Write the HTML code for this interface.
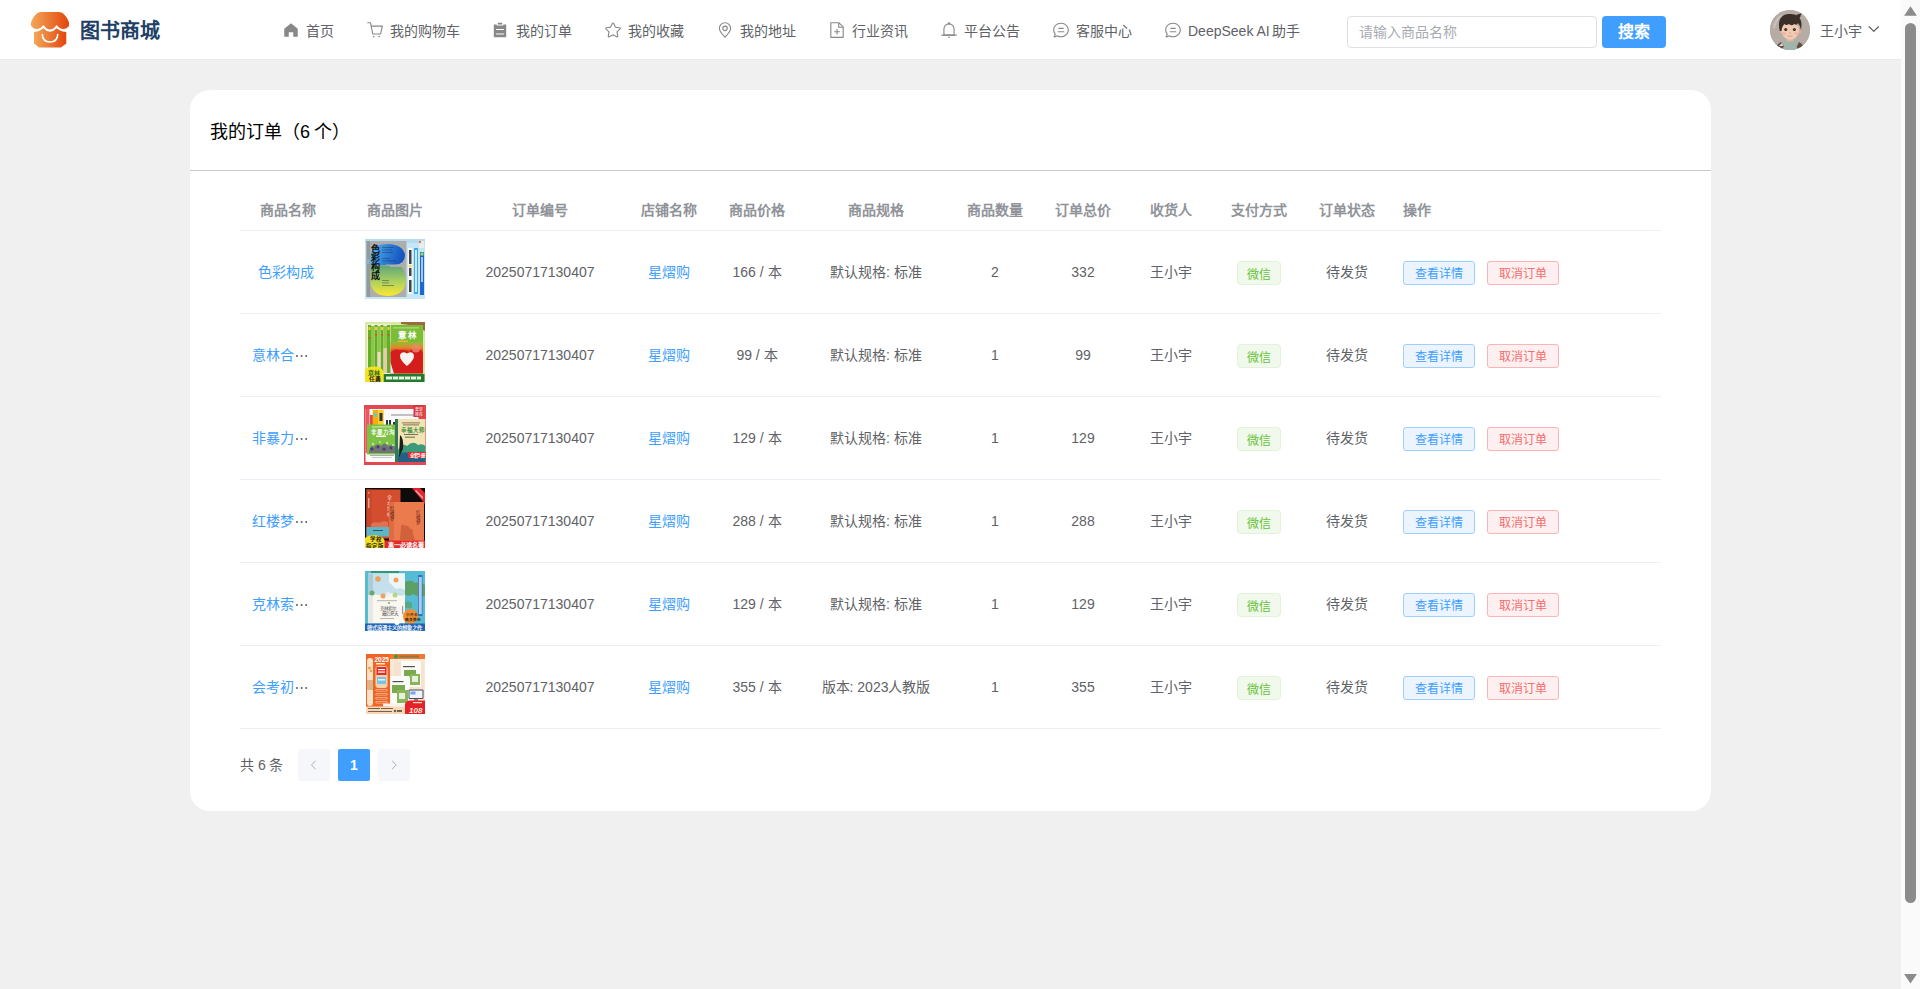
<!DOCTYPE html>
<html lang="zh-CN">
<head>
<meta charset="utf-8">
<title>我的订单</title>
<style>
*{box-sizing:border-box;margin:0;padding:0}
html,body{width:1920px;height:989px;overflow:hidden}
body{font-family:"Liberation Sans",sans-serif;background:#f0f0f0;position:relative;color:#606266;font-size:14px}
.abs{position:absolute}
.hdr{position:absolute;left:0;top:0;width:1901px;height:60px;background:#fff;border-bottom:1px solid #ebebeb}
.logo{position:absolute;left:28px;top:8px;width:44px;height:44px}
.brand{position:absolute;left:80px;top:16px;font-size:20px;line-height:30px;font-weight:bold;color:#213f66;white-space:nowrap}
.nav{position:absolute;top:0;height:59px}
.nav svg{position:absolute;top:21px;width:18px;height:18px;fill:#888}
.nav span{position:absolute;top:21px;line-height:20px;font-size:14px;color:#606266;white-space:nowrap}
.search{position:absolute;left:1347px;top:16px;width:250px;height:32px;border:1px solid #dcdfe6;border-radius:4px;background:#fff}
.search span{position:absolute;left:11px;top:5px;line-height:20px;font-size:14px;color:#a8abb2;white-space:nowrap}
.sbtn{position:absolute;left:1602px;top:16px;width:64px;height:32px;border-radius:4px;background:#409eff;color:#fff;font-size:16px;font-weight:bold;text-align:center;line-height:32px}
.avatar{position:absolute;left:1770px;top:10px;width:40px;height:40px;border-radius:50%;overflow:hidden;background:#b1a9a3}
.uname{position:absolute;left:1820px;top:21px;line-height:20px;font-size:14px;color:#606266;white-space:nowrap}
.sb{position:absolute;left:1901px;top:0;width:19px;height:989px;background:#fafafa}
.card{position:absolute;left:190px;top:90px;width:1521px;height:721px;background:#fff;border-radius:20px}
.ctitle{position:absolute;left:20px;top:30px;font-size:18px;line-height:24px;color:#000;white-space:nowrap}
.csep{position:absolute;left:0;top:80px;width:1521px;height:1px;background:#cbcbcb}
.th{position:absolute;top:199px;line-height:23px;font-size:14px;font-weight:bold;color:#909399;text-align:center;white-space:nowrap}
.rl{position:absolute;left:240px;width:1421px;height:1px;background:#ebeef5}
.td{position:absolute;line-height:23px;font-size:14px;color:#606266;text-align:center;white-space:nowrap}
.lk{color:#409eff}
.ell{display:inline-block;width:14px;height:23px;position:relative;vertical-align:top}
.ell:before{content:"";position:absolute;left:1.5px;top:10.5px;width:2px;height:2px;border-radius:1px;background:#5a5c60;box-shadow:4.6px 0 0 #5a5c60,9.2px 0 0 #5a5c60}
.img{position:absolute;left:365px;width:60px;height:60px;overflow:hidden;background:#ddd}
.tag{position:absolute;left:1237px;width:44px;height:24px;border:1px solid #e1f3d8;background:#f0f9eb;color:#67c23a;border-radius:4px;font-size:12px;line-height:22px;padding-top:2px;text-align:center;white-space:nowrap}
.btn{position:absolute;width:72px;height:24px;border:1px solid;border-radius:3px;font-size:12px;font-weight:500;line-height:22px;padding-top:1px;text-align:center;white-space:nowrap}
.bp{left:1403px;border-color:#a0cfff;background:#ecf5ff;color:#409eff}
.bd{left:1487px;border-color:#fab6b6;background:#fef0f0;color:#f56c6c}
.ptot{position:absolute;left:240px;top:755px;line-height:20px;font-size:14px;color:#606266;white-space:nowrap}
.pb{position:absolute;top:749px;width:32px;height:32px;border-radius:2px;background:#f5f7fa;color:#fff;font-weight:bold;font-size:14px;line-height:32px;text-align:center}
.pb svg{position:absolute;left:10px;top:10px;width:12px;height:12px;fill:#a8abb2}
.pa{background:#409eff}
.im3{left:364px!important;width:62px!important}.im6{left:366px!important;width:59px!important}
</style>
</head>
<body>
<div class="hdr">
  <svg class="logo" viewBox="0 0 44 44">
    <defs><linearGradient id="lg" x1="0" x2="1" y1="0" y2="0"><stop offset="0" stop-color="#f3a758"/><stop offset="1" stop-color="#e2460e"/></linearGradient></defs>
    <path fill="url(#lg)" d="M13 4H31Q36 4 40 12Q42 16 40.5 18.5Q38 21.5 34.5 21Q31 20.5 28.5 17Q25.5 21.5 22 21.5Q18.5 21.5 15.5 17Q13 20.5 9.5 21Q6 21.5 3.5 18.5Q2 16 4 12Q8 4 13 4Z"/>
    <path fill="url(#lg)" d="M6 24Q11 24 15.3 20.3Q18.5 23.8 22 23.8Q25.5 23.8 28.6 20.3Q33 24 38.3 24V35.5L33 39.6H11L6 35.5Z"/>
    <path d="M14.3 26.6Q14.5 34 22 34Q29.5 34 29.7 26.6" fill="none" stroke="#fff" stroke-width="1.6" stroke-linecap="round"/>
  </svg>
  <div class="brand">图书商城</div>
  <div class="nav"><svg viewBox="0 0 1024 1024" style="left:281.5px"><path d="M512 128 128 447.936V896h255.936V640H640v256h255.936V447.936z"/></svg><span style="left:306.0px">首页</span></div>
  <div class="nav"><svg viewBox="0 0 1024 1024" style="left:366.1px"><path d="M432 928a48 48 0 1 1 0-96 48 48 0 0 1 0 96m320 0a48 48 0 1 1 0-96 48 48 0 0 1 0 96M96 128a32 32 0 0 1 0-64h160a32 32 0 0 1 31.36 25.728L320.64 256H928a32 32 0 0 1 31.296 38.72l-96 448A32 32 0 0 1 832 768H384a32 32 0 0 1-31.36-25.728L229.76 128zm314.24 576h395.904l82.176-384H333.44l76.8 384z"/></svg><span style="left:390.3px">我的购物车</span></div>
  <div class="nav"><svg viewBox="0 0 1024 1024" style="left:491.4px"><path d="M704 192h160v736H160V192h160v64h384zM288 512h448v-64H288zm0 256h448v-64H288zm96-576V96h256v96z"/></svg><span style="left:516.3px">我的订单</span></div>
  <div class="nav"><svg viewBox="0 0 1024 1024" style="left:603.5px"><path d="M512 747.84l228.16 119.936a6.4 6.4 0 0 0 9.28-6.72l-43.52-254.08 184.512-179.904a6.4 6.4 0 0 0-3.52-10.88l-255.104-37.12L517.76 147.904a6.4 6.4 0 0 0-11.52 0L392.192 379.072l-255.104 37.12a6.4 6.4 0 0 0-3.52 10.88L318.08 606.976l-43.584 254.08a6.4 6.4 0 0 0 9.28 6.72zM313.6 924.48a70.4 70.4 0 0 1-102.144-74.24l37.888-220.928L88.96 472.96A70.4 70.4 0 0 1 128 352.896l221.76-32.256 99.2-200.96a70.4 70.4 0 0 1 126.208 0l99.2 200.96 221.824 32.256a70.4 70.4 0 0 1 39.04 120.064L774.72 629.376l37.888 220.928a70.4 70.4 0 0 1-102.144 74.24L512 820.096l-198.4 104.32z"/></svg><span style="left:628.3px">我的收藏</span></div>
  <div class="nav"><svg viewBox="0 0 1024 1024" style="left:715.5px"><path d="M800 416a288 288 0 1 0-576 0c0 118.144 94.528 272.128 288 456.576C705.472 688.128 800 534.144 800 416M512 960C277.312 746.688 160 565.312 160 416a352 352 0 0 1 704 0c0 149.312-117.312 330.688-352 544"/><path d="M512 512a96 96 0 1 0 0-192 96 96 0 0 0 0 192m0 64a160 160 0 1 1 0-320 160 160 0 0 1 0 320"/></svg><span style="left:740.0px">我的地址</span></div>
  <div class="nav"><svg viewBox="0 0 1024 1024" style="left:827.8px"><path d="M832 384H576V128H192v768h640zm-26.496-64L640 154.496V320zM160 64h480l256 256v608a32 32 0 0 1-32 32H160a32 32 0 0 1-32-32V96a32 32 0 0 1 32-32m320 512V448h64v128h128v64H544v128h-64V640H352v-64z"/></svg><span style="left:852.0px">行业资讯</span></div>
  <div class="nav"><svg viewBox="0 0 1024 1024" style="left:940.1px"><path d="M512 64a64 64 0 0 1 64 64v64H448v-64a64 64 0 0 1 64-64"/><path d="M256 768h512V448a256 256 0 1 0-512 0zm256-640a320 320 0 0 1 320 320v384H192V448a320 320 0 0 1 320-320"/><path d="M96 768h832q32 0 32 32t-32 32H96q-32 0-32-32t32-32m352 128h128a64 64 0 0 1-128 0"/></svg><span style="left:963.6px">平台公告</span></div>
  <div class="nav"><svg viewBox="0 0 1024 1024" style="left:1051.6px"><path d="M174.72 855.68l135.296-45.12 23.68 11.84C388.096 849.536 448.576 864 512 864c211.84 0 384-166.784 384-352S723.84 160 512 160 128 326.784 128 512c0 69.12 24.96 139.264 70.848 199.232l22.08 28.8-46.272 115.584zm-45.248 82.56A32 32 0 0 1 89.6 896l58.368-145.92C94.72 680.32 64 596.864 64 512 64 299.904 256 96 512 96s448 203.904 448 416-192 416-448 416a461.056 461.056 0 0 1-206.912-48.384l-175.616 58.56z"/><path d="M352 576h320q32 0 32 32t-32 32H352q-32 0-32-32t32-32m32-192h256q32 0 32 32t-32 32H384q-32 0-32-32t32-32"/></svg><span style="left:1076.0px">客服中心</span></div>
  <div class="nav"><svg viewBox="0 0 1024 1024" style="left:1163.5px"><path d="M174.72 855.68l135.296-45.12 23.68 11.84C388.096 849.536 448.576 864 512 864c211.84 0 384-166.784 384-352S723.84 160 512 160 128 326.784 128 512c0 69.12 24.96 139.264 70.848 199.232l22.08 28.8-46.272 115.584zm-45.248 82.56A32 32 0 0 1 89.6 896l58.368-145.92C94.72 680.32 64 596.864 64 512 64 299.904 256 96 512 96s448 203.904 448 416-192 416-448 416a461.056 461.056 0 0 1-206.912-48.384l-175.616 58.56z"/><path d="M352 576h320q32 0 32 32t-32 32H352q-32 0-32-32t32-32m32-192h256q32 0 32 32t-32 32H384q-32 0-32-32t32-32"/></svg><span style="left:1188.0px">DeepSeek AI <i style="font-style:normal;margin-left:-1.5px">助手</i></span></div>
  <div class="search"><span>请输入商品名称</span></div>
  <div class="sbtn">搜索</div>
  <div class="avatar"><svg width="40" height="40" viewBox="0 0 40 40">
<rect width="40" height="40" fill="#b5aca6"/>
<path d="M4 18Q6 8 12 6" stroke="#d8d2cc" stroke-width="2" fill="none" opacity=".6"/>
<path d="M5 40Q8 32 15 30.5H25Q32 32 35 40Z" fill="#9fb4aa"/>
<path d="M5 40Q7 34 11 32L14 36.5L11 40Z" fill="#6b4a40"/>
<path d="M35 40Q33 34 29 32L26.5 37L29 40Z" fill="#6b4a40"/>
<path d="M9 36L12 33L13 36Z" fill="#e8e4de"/>
<rect x="16.5" y="25" width="7" height="6.5" fill="#e6b29a"/>
<ellipse cx="11.3" cy="21" rx="2" ry="2.6" fill="#e3a98f"/>
<ellipse cx="29.2" cy="21" rx="2" ry="2.6" fill="#e3a98f"/>
<ellipse cx="20.2" cy="20.5" rx="8.8" ry="9.2" fill="#f0cbb4"/>
<path d="M9.8 21Q8 14 10 9Q13 4 19 4Q24 3.5 28 6L31 5.5L29.5 8Q32.5 11 31 20Q30 15 28 13Q27 16 24 14Q22 16.5 19 14Q16 16 14.5 14Q12 16 11.5 21Z" fill="#3c2f2a"/>

<path d="M26 5L32 3L29 8Z" fill="#3c2f2a"/>
<circle cx="15.8" cy="19.6" r="1.5" fill="#2d2522"/>
<circle cx="24.4" cy="19.6" r="1.5" fill="#2d2522"/>
<circle cx="16.2" cy="19.1" r=".45" fill="#fff"/>
<circle cx="24.8" cy="19.1" r=".45" fill="#fff"/>
<ellipse cx="13.8" cy="23.5" rx="2" ry="1.2" fill="#eaa996" opacity=".7"/>
<ellipse cx="26.5" cy="23.5" rx="2" ry="1.2" fill="#eaa996" opacity=".7"/>
<ellipse cx="20" cy="23" rx="1" ry=".8" fill="#e9a08c"/>
<path d="M17.5 25.8Q20 27 22.5 25.8" stroke="#c98f7c" stroke-width=".7" fill="none"/>
</svg></div>
  <div class="uname">王小宇</div>
  <svg style="position:absolute;left:1866px;top:24px;width:14px;height:10px" viewBox="0 0 14 10"><path d="M3.2 2.8L7.8 7.4L12.4 2.8" fill="none" stroke="#606266" stroke-width="1.25" stroke-linecap="round" stroke-linejoin="round"/></svg>
</div>
<div class="sb"><svg width="19" height="989" viewBox="0 0 19 989" style="position:absolute;left:0;top:0">
<path d="M9.5 6.2L15.6 15.2Q16 15.8 15.3 15.8H3.7Q3 15.8 3.4 15.2Z" fill="#8b8b8b"/>
<rect x="4" y="23" width="11" height="880" rx="5.5" fill="#8b8b8b"/>
<path d="M9.5 983.6L15.6 974.6Q16 974 15.3 974H3.7Q3 974 3.4 974.6Z" fill="#8b8b8b"/>
</svg></div>
<div class="card">
  <div class="ctitle">我的订单（6 <i style="font-style:normal;margin-left:-1px">个）</i></div>
  <div class="csep"></div>
</div>
<!--TABLE-->
<div class="th" style="left:240px;width:95px">商品名称</div>
<div class="th" style="left:335px;width:120px">商品图片</div>
<div class="th" style="left:455px;width:170px">订单编号</div>
<div class="th" style="left:625px;width:88px">店铺名称</div>
<div class="th" style="left:713px;width:88px">商品价格</div>
<div class="th" style="left:801px;width:150px">商品规格</div>
<div class="th" style="left:951px;width:88px">商品数量</div>
<div class="th" style="left:1039px;width:88px">订单总价</div>
<div class="th" style="left:1127px;width:88px">收货人</div>
<div class="th" style="left:1215px;width:88px">支付方式</div>
<div class="th" style="left:1303px;width:88px">订单状态</div>
<div class="th" style="left:1403px;text-align:left">操作</div>
<div class="rl" style="top:230px"></div>
<div class="td lk" style="left:238.5px;width:95px;top:261px">色彩构成</div>
<div class="img im1" style="top:239px"><!--IMG1--><svg width="60" height="60" viewBox="0 0 60 60">
<defs>
<linearGradient id="b1a" x1="0" y1="0" x2="1" y2="0.2"><stop offset="0" stop-color="#5ab8ee"/><stop offset=".6" stop-color="#2a7ad6"/><stop offset="1" stop-color="#1455bf"/></linearGradient>
<linearGradient id="b1b" x1="0" y1="0" x2="0" y2="1"><stop offset="0" stop-color="#5fa578"/><stop offset=".5" stop-color="#a9cf62"/><stop offset="1" stop-color="#fbe92e"/></linearGradient>
</defs>
<rect width="60" height="60" fill="#c6e6f4"/>
<rect x="0" y="0" width="60" height="4" fill="#b5dcee"/>
<rect x="1.5" y="2" width="40" height="56" fill="#adadad"/>
<rect x="1.5" y="2" width="3.5" height="56" fill="#95989b"/>
<rect x="2.2" y="20" width="1.8" height="5" fill="#7ab8e0"/>
<path d="M5.5 17Q6 5 23 5Q38 5.5 40 16Q40 25.5 29 26H5.5Z" fill="url(#b1a)"/>
<path d="M5.5 26.5H34Q41 30 41 42Q40 56.5 22 57Q6 56 5.5 42Z" fill="url(#b1b)"/>
<path d="M20 25.5H41V28H26Z" fill="#adadad"/>
<text x="6" y="12.5" font-family="Liberation Sans" font-size="9" font-weight="bold" fill="#111">色</text>
<text x="6" y="21.5" font-family="Liberation Sans" font-size="9" font-weight="bold" fill="#111">彩</text>
<text x="6" y="30.5" font-family="Liberation Sans" font-size="9" font-weight="bold" fill="#111">构</text>
<text x="6" y="39.5" font-family="Liberation Sans" font-size="9" font-weight="bold" fill="#111">成</text>
<g fill="#1a2a3a" opacity=".5"><rect x="17" y="8" width="12" height=".8"/><rect x="17" y="10.5" width="10" height=".8"/><rect x="17" y="13" width="11" height=".8"/><rect x="17" y="19" width="8" height=".8"/><rect x="17" y="21.5" width="14" height=".8"/><rect x="17" y="41" width="7" height=".8"/><rect x="17" y="43.5" width="7" height=".8"/><rect x="17" y="46" width="12" height=".8"/></g>
<rect x="43" y="9" width="4.5" height="46" fill="#f4f8fb"/>
<g fill="#444"><rect x="44" y="11" width="2.5" height="14"/><rect x="44" y="29" width="2.5" height="8"/><rect x="44" y="41" width="2.5" height="12"/></g>
<circle cx="45.2" cy="27" r="1.6" fill="#f1e24a"/>
<rect x="49" y="9" width="4" height="46" fill="#38acef"/>
<g fill="#fff" opacity=".75"><rect x="50" y="11" width="2" height="42"/></g>
<rect x="55" y="13" width="4" height="43" fill="#1b67d6"/>
<rect x="55.5" y="13.5" width="3" height="3" fill="#9be04a"/>
<g fill="#e9f2ff" opacity=".7"><rect x="56" y="18" width="2" height="25"/></g>
<rect x="54" y="2" width="5" height="7" fill="#e6ecef"/>
<rect x="54" y="2" width="2" height="2" fill="#e8743a"/>
</svg></div>
<div class="td" style="left:455px;width:170px;top:261px">20250717130407</div>
<div class="td lk" style="left:625px;width:88px;top:261px">星熠购</div>
<div class="td" style="left:713px;width:88px;top:261px">166 / 本</div>
<div class="td" style="left:801px;width:150px;top:261px">默认规格: 标准</div>
<div class="td" style="left:951px;width:88px;top:261px">2</div>
<div class="td" style="left:1039px;width:88px;top:261px">332</div>
<div class="td" style="left:1127px;width:88px;top:261px">王小宇</div>
<div class="tag" style="top:261px">微信</div>
<div class="td" style="left:1303px;width:88px;top:261px">待发货</div>
<div class="btn bp" style="top:261px">查看详情</div>
<div class="btn bd" style="top:261px">取消订单</div>
<div class="rl" style="top:313px"></div>
<div class="td lk" style="left:252px;top:344px;text-align:left">意林合<i class="ell"></i></div>
<div class="img im2" style="top:322px"><!--IMG2--><svg width="60" height="60" viewBox="0 0 60 60">
<rect width="60" height="60" fill="#dbe8a4"/>
<path d="M36 0H60V9Q50 3 36 2Z" fill="#9b6a3e"/>
<rect x="2" y="2" width="24" height="50" fill="#eef2dc"/>
<g fill="#64ad2a"><rect x="3" y="3" width="3" height="48"/><rect x="9.5" y="3" width="3" height="48"/><rect x="15.5" y="3" width="3" height="48"/><rect x="22" y="3" width="3" height="48"/></g>
<g fill="#8cc645"><rect x="6" y="4" width="3.5" height="42"/><rect x="12.5" y="4" width="3" height="26"/><rect x="18.5" y="4" width="3.5" height="22"/></g>
<rect x="12.5" y="30" width="3" height="20" fill="#f0d8c4"/>
<rect x="18.5" y="26" width="3.5" height="25" fill="#e8c9a8"/>
<g fill="#f2d22a"><rect x="3.5" y="5" width="2" height="3"/><rect x="10" y="5" width="2" height="3"/><rect x="16" y="5" width="2" height="3"/><rect x="22.5" y="5" width="2" height="3"/></g>
<g fill="#d8501e"><rect x="3.5" y="15" width="2" height="1.5"/><rect x="10" y="12" width="2" height="1.5"/><rect x="16" y="12" width="2" height="1.5"/><rect x="22.5" y="12" width="2" height="1.5"/></g>
<rect x="25.5" y="3" width="32.5" height="48.5" fill="#7cbd38"/>
<rect x="28" y="5.5" width="26" height=".8" fill="#cfe8a0"/>
<text x="33" y="15.5" font-family="Liberation Sans" font-size="8.5" font-weight="bold" fill="#fff">意</text>
<text x="42.5" y="15.5" font-family="Liberation Sans" font-size="8.5" font-weight="bold" fill="#fff">林</text>
<rect x="33" y="18.5" width="10" height="1.5" fill="#f5b42a"/>
<linearGradient id="b2g" x1="0" y1="0" x2="0" y2="1"><stop offset="0" stop-color="#8cbf3a"/><stop offset=".45" stop-color="#e08a2a"/><stop offset="1" stop-color="#d41c1c"/></linearGradient>
<rect x="25.5" y="20" width="32.5" height="12" fill="url(#b2g)"/>
<path d="M25.5 51.5V31Q29 26 35 28Q41 27 44 30Q47 25 52 27Q57 27 58 32V51.5Z" fill="#d61d1d"/>
<circle cx="51" cy="26" r="4.5" fill="#e98a6a" opacity=".8"/>
<path d="M42 44Q34.5 38 35 33Q36.5 28.5 42 31.5Q47.5 28.5 49 33Q49.5 38 42 44Z" fill="#f8f4ee"/>
<path d="M25.5 40V51.5H29Q27 46 25.5 40Z" fill="#eeeef0"/>
<rect x="18.5" y="52" width="41" height="8" fill="#237a2e"/>
<g fill="#e8f4e0"><rect x="21" y="54.5" width="35" height="3"/></g>
<g fill="#237a2e"><rect x="27" y="54.5" width=".8" height="3"/><rect x="33" y="54.5" width=".8" height="3"/><rect x="39" y="54.5" width=".8" height="3"/><rect x="45" y="54.5" width=".8" height="3"/><rect x="51" y="54.5" width=".8" height="3"/></g>
<path d="M0 60V48Q2 44.5 9 44.5Q17 44.5 18.5 50V60Z" fill="#f4e31c"/>
<text x="2.5" y="52.5" font-family="Liberation Sans" font-size="6" font-weight="bold" fill="#2f6f28">京林</text>
<text x="4" y="59" font-family="Liberation Sans" font-size="6" font-weight="bold" fill="#2a2a20">任勇</text>
</svg></div>
<div class="td" style="left:455px;width:170px;top:344px">20250717130407</div>
<div class="td lk" style="left:625px;width:88px;top:344px">星熠购</div>
<div class="td" style="left:713px;width:88px;top:344px">99 / 本</div>
<div class="td" style="left:801px;width:150px;top:344px">默认规格: 标准</div>
<div class="td" style="left:951px;width:88px;top:344px">1</div>
<div class="td" style="left:1039px;width:88px;top:344px">99</div>
<div class="td" style="left:1127px;width:88px;top:344px">王小宇</div>
<div class="tag" style="top:344px">微信</div>
<div class="td" style="left:1303px;width:88px;top:344px">待发货</div>
<div class="btn bp" style="top:344px">查看详情</div>
<div class="btn bd" style="top:344px">取消订单</div>
<div class="rl" style="top:396px"></div>
<div class="td lk" style="left:252px;top:427px;text-align:left">非暴力<i class="ell"></i></div>
<div class="img im3" style="top:405px"><!--IMG3--><svg width="62" height="60" viewBox="0 0 62 60">
<rect width="62" height="60" fill="#e3474f"/>
<rect x="1.5" y="4" width="53" height="53" fill="#fbfafa"/>
<rect x="1.5" y="4" width="4" height="44" fill="#e95a60"/>
<rect x="6" y="10" width="4" height="10" fill="#e34848"/>
<rect x="8.7" y="5" width="5.5" height="16" fill="#f5b300"/>
<rect x="14.2" y="5" width="5.5" height="16" fill="#f8cb2e"/>
<rect x="15.5" y="8" width="3" height="8" fill="#333"/>
<rect x="9.5" y="8" width="3.5" height="4" fill="#6fc6cc"/>
<g fill="#333"><rect x="22" y="15" width="2" height="6"/><rect x="25" y="15" width="2" height="6"/><rect x="29" y="17" width="2.5" height="5"/></g>
<rect x="27" y="9.5" width="24" height="1" fill="#888"/>
<rect x="3" y="19.5" width="30" height="30" fill="#7dc244"/>
<rect x="8" y="21.5" width="20" height=".8" fill="#e8f5da"/>
<text x="7" y="29" font-family="Liberation Sans" font-size="5.5" font-weight="bold" fill="#fff">非暴力沟通</text>
<rect x="12" y="30.5" width="10" height="1.5" fill="#fff"/>
<path d="M5 46Q7 39 10 42Q13 37 17 41Q21 36 24 41Q28 38 32 43V48H5Z" fill="#6a5a8a" opacity=".75"/><g fill="#4d3a72"><circle cx="8" cy="44" r="1.6"/><circle cx="14" cy="42" r="1.4"/><circle cx="20" cy="44" r="1.6"/><circle cx="27" cy="43" r="1.4"/></g>
<g fill="#c8e6a0"><circle cx="9" cy="39" r="1.2"/><circle cx="16" cy="37" r="1"/><circle cx="23" cy="38" r="1.2"/><circle cx="29" cy="40" r="1"/></g>
<rect x="6" y="50" width="24" height=".8" fill="#999"/>
<rect x="8" y="52" width="20" height=".8" fill="#bbb"/>
<rect x="31" y="14" width="30.5" height="43" fill="#f1e4b4"/>
<rect x="31" y="14" width="3" height="43" fill="#2f7a5a"/>
<rect x="38" y="17.5" width="18" height=".8" fill="#6a5a3a"/>
<rect x="39" y="19.5" width="16" height=".8" fill="#6a5a3a"/>
<text x="37" y="27" font-family="Liberation Sans" font-size="5.5" font-weight="bold" fill="#3d8a3e">幸福大师课</text>
<rect x="40" y="29" width="14" height=".8" fill="#555"/>
<rect x="41" y="31.5" width="10" height="1.5" fill="#8a9a5a"/>
<path d="M34 45Q38 37 43 41Q49 35 54 40Q58 38 61.5 41V57H34Z" fill="#3a9a7a"/>
<path d="M34 50Q40 45 47 49Q54 45 61.5 48V57H34Z" fill="#275f84"/>
<path d="M36 30Q40 33 39 44L35 52Z" fill="#1e1e1e"/>
<circle cx="41" cy="26" r="2" fill="#fff" opacity=".0"/>
<rect x="44" y="47" width="17.5" height="6" fill="#e12a2c"/>
<text x="46" y="52" font-family="Liberation Sans" font-size="4.5" font-weight="bold" fill="#fff">全套5册</text>
<rect x="49.5" y="0" width="10" height="12" fill="#d8333a"/>
<text x="50.5" y="5.5" font-family="Liberation Sans" font-size="4" fill="#fff">套装</text>
<text x="50.5" y="10.5" font-family="Liberation Sans" font-size="4" fill="#fff">推荐</text>
</svg></div>
<div class="td" style="left:455px;width:170px;top:427px">20250717130407</div>
<div class="td lk" style="left:625px;width:88px;top:427px">星熠购</div>
<div class="td" style="left:713px;width:88px;top:427px">129 / 本</div>
<div class="td" style="left:801px;width:150px;top:427px">默认规格: 标准</div>
<div class="td" style="left:951px;width:88px;top:427px">1</div>
<div class="td" style="left:1039px;width:88px;top:427px">129</div>
<div class="td" style="left:1127px;width:88px;top:427px">王小宇</div>
<div class="tag" style="top:427px">微信</div>
<div class="td" style="left:1303px;width:88px;top:427px">待发货</div>
<div class="btn bp" style="top:427px">查看详情</div>
<div class="btn bd" style="top:427px">取消订单</div>
<div class="rl" style="top:479px"></div>
<div class="td lk" style="left:252px;top:510px;text-align:left">红楼梦<i class="ell"></i></div>
<div class="img im4" style="top:488px"><!--IMG4--><svg width="60" height="60" viewBox="0 0 60 60">
<rect width="60" height="60" fill="#0e0b0b"/>
<rect x="1.5" y="1.5" width="34" height="49" fill="#d44d2e"/>
<rect x="1.5" y="1.5" width="5" height="49" fill="#c8462b"/>
<g fill="#f1c9b8" opacity=".7"><rect x="3" y="4" width="1.5" height="1.5"/><rect x="3" y="10" width="1.5" height="10"/></g>
<text x="22" y="11" font-family="Liberation Sans" font-size="5" fill="#f6dccf">全</text>
<text x="22" y="16.5" font-family="Liberation Sans" font-size="5" fill="#f6dccf">本</text>
<text x="22" y="22" font-family="Liberation Sans" font-size="5" fill="#f6dccf">红</text>
<text x="22" y="27.5" font-family="Liberation Sans" font-size="5" fill="#f6dccf">楼</text>
<path d="M6 36Q10 33 14 35Q18 32 23 34V40H6Z" fill="#e27a5e" opacity=".8"/>
<rect x="1.5" y="39" width="22.5" height="9.5" fill="#5cb6c6"/>
<rect x="8" y="42" width="10" height="1" fill="#24586a"/>
<rect x="24" y="14" width="35" height="39" fill="#eb7a4c"/>
<rect x="24" y="14" width="5" height="39" fill="#df6c40"/>
<text x="24.5" y="22" font-family="Liberation Sans" font-size="4.5" fill="#5a2018">红</text>
<text x="24.5" y="27" font-family="Liberation Sans" font-size="4.5" fill="#5a2018">楼</text>
<text x="24.5" y="32" font-family="Liberation Sans" font-size="4.5" fill="#5a2018">梦</text>
<text x="51" y="26" font-family="Liberation Sans" font-size="4.5" fill="#5a2018">红</text>
<text x="51" y="31" font-family="Liberation Sans" font-size="4.5" fill="#5a2018">楼</text>
<text x="51" y="36" font-family="Liberation Sans" font-size="4.5" fill="#5a2018">梦</text>
<path d="M36 38Q38 35 40 38Q43 36 45 41Q48 40 48 46L50 52H35Z" fill="#c75a34" opacity=".75"/>
<path d="M47 0H55L60 5V16Z" fill="#e3252b"/>
<g fill="#fff" opacity=".6"><path d="M51 2L58 9V11L50 3Z"/></g>
<rect x="19" y="52.5" width="41" height="7.5" fill="#e02a2a"/>
<text x="23" y="59" font-family="Liberation Sans" font-size="6.2" font-weight="bold" fill="#fff">高一必读名著</text>
<path d="M0 60V50Q3 47 10 47Q18 48 19.5 52V60Z" fill="#f2e02a"/>
<text x="4.5" y="53" font-family="Liberation Sans" font-size="5.5" font-weight="bold" fill="#2a2010">学校</text>
<text x="1" y="59.5" font-family="Liberation Sans" font-size="5.5" font-weight="bold" fill="#2a2010">指定版</text>
</svg></div>
<div class="td" style="left:455px;width:170px;top:510px">20250717130407</div>
<div class="td lk" style="left:625px;width:88px;top:510px">星熠购</div>
<div class="td" style="left:713px;width:88px;top:510px">288 / 本</div>
<div class="td" style="left:801px;width:150px;top:510px">默认规格: 标准</div>
<div class="td" style="left:951px;width:88px;top:510px">1</div>
<div class="td" style="left:1039px;width:88px;top:510px">288</div>
<div class="td" style="left:1127px;width:88px;top:510px">王小宇</div>
<div class="tag" style="top:510px">微信</div>
<div class="td" style="left:1303px;width:88px;top:510px">待发货</div>
<div class="btn bp" style="top:510px">查看详情</div>
<div class="btn bd" style="top:510px">取消订单</div>
<div class="rl" style="top:562px"></div>
<div class="td lk" style="left:252px;top:593px;text-align:left">克林索<i class="ell"></i></div>
<div class="img im5" style="top:571px"><!--IMG5--><svg width="60" height="60" viewBox="0 0 60 60">
<rect width="60" height="60" fill="#56bcd4"/>
<rect x="6" y="0" width="28" height="2" fill="#2a9a7a"/>
<path d="M40 11Q46 8 50 12Q55 10 60 14V25Q54 27 48 23Q43 27 40 23Z" fill="#5e9f66"/>
<path d="M40 31Q44 29 47 32V37H40Z" fill="#5e9f66" opacity=".7"/>
<rect x="3" y="2.5" width="37" height="50" fill="#faf7f0"/>
<rect x="3" y="2.5" width="5" height="50" fill="#e6e8e6"/>
<path d="M8 2.5H40V24Q33 26 27 22Q20 26 8 23Z" fill="#c5e0ec"/>
<path d="M24 2.5H40V19Q35 16 31 18Q27 14 24 11Z" fill="#eef5f7"/>
<path d="M3 2.5H8V24H3Z" fill="#a9ccd8"/>
<circle cx="13" cy="8" r="2.8" fill="#eaa35f"/>
<circle cx="31" cy="9" r="2.5" fill="#eaa35f"/>
<circle cx="18" cy="25" r="2.5" fill="#f0a060"/>
<circle cx="30" cy="24" r="2.5" fill="#b6d68a"/>
<circle cx="7" cy="22" r="2.5" fill="#6aa86e"/>
<circle cx="23" cy="23" r="2" fill="#e8f0f0"/>
<rect x="12" y="29.5" width="20" height=".6" fill="#888"/>
<circle cx="24" cy="32" r="1.1" fill="#7ab55a"/>
<text x="15" y="39" font-family="Liberation Sans" font-size="4.5" fill="#555">克林索尔</text>
<text x="17" y="44" font-family="Liberation Sans" font-size="4.5" fill="#555">最后夏天</text>
<rect x="15" y="47" width="14" height=".6" fill="#888"/>
<rect x="37" y="35" width="1.2" height="8" fill="#999"/>
<circle cx="45.5" cy="45.5" r="7.5" fill="#f28f33"/>
<text x="40.5" y="45" font-family="Liberation Sans" font-size="3.6" font-weight="bold" fill="#2a1a10">小开本</text>
<text x="39.5" y="49.5" font-family="Liberation Sans" font-size="3.6" font-weight="bold" fill="#2a1a10">随身携带</text>
<rect x="0" y="52.5" width="60" height="7.5" fill="#2262b6"/>
<text x="2" y="58.5" font-family="Liberation Sans" font-size="5.3" font-weight="bold" fill="#f0f6ff">德式浪漫主义的想象之作</text>
<rect x="53" y="4" width="4.5" height="41" fill="#2f72c6"/>
<rect x="53.8" y="6" width="3" height="37" fill="#dfeafa" opacity=".75"/>
<circle cx="32" cy="51.5" r="2.5" fill="#fff"/>
</svg></div>
<div class="td" style="left:455px;width:170px;top:593px">20250717130407</div>
<div class="td lk" style="left:625px;width:88px;top:593px">星熠购</div>
<div class="td" style="left:713px;width:88px;top:593px">129 / 本</div>
<div class="td" style="left:801px;width:150px;top:593px">默认规格: 标准</div>
<div class="td" style="left:951px;width:88px;top:593px">1</div>
<div class="td" style="left:1039px;width:88px;top:593px">129</div>
<div class="td" style="left:1127px;width:88px;top:593px">王小宇</div>
<div class="tag" style="top:593px">微信</div>
<div class="td" style="left:1303px;width:88px;top:593px">待发货</div>
<div class="btn bp" style="top:593px">查看详情</div>
<div class="btn bd" style="top:593px">取消订单</div>
<div class="rl" style="top:645px"></div>
<div class="td lk" style="left:252px;top:676px;text-align:left">会考初<i class="ell"></i></div>
<div class="img im6" style="top:654px"><!--IMG6--><svg width="60" height="60" viewBox="0 0 60 60">
<rect width="60" height="60" fill="#f8e4d4"/>
<path d="M24 5H60V60H24Z" fill="#f9e8da"/>
<path d="M28 8H58V50H28Z" fill="#f6dcc6" opacity=".6"/>
<rect x="0" y="0" width="24" height="53" fill="#ee6526"/>
<rect x="24" y="0" width="36" height="5" fill="#f07a34"/>
<circle cx="30" cy="2.5" r="2" fill="#3f9a3a"/>
<rect x="33" y="1.5" width="20" height="2" fill="#5a7a40" opacity=".7"/>
<rect x="1" y="4" width="6" height="48" rx="3" fill="#f7e3c8"/>
<circle cx="3.5" cy="14" r="1.5" fill="#f0a050"/><circle cx="5" cy="17" r="1.2" fill="#f0a050"/>
<rect x="1" y="26" width="6" height="10" fill="#dcb48c"/>
<text x="8.5" y="8" font-family="Liberation Sans" font-size="6.5" font-weight="bold" fill="#fff">2025</text>
<rect x="10" y="9" width="9" height="1.5" fill="#fde8d0"/>
<rect x="9.5" y="12" width="12" height="22" rx="3" fill="#f5d3a8"/>
<rect x="10.5" y="13" width="10" height="8" fill="#e52a2a"/>
<rect x="12" y="15" width="7" height="1.2" fill="#fff"/><rect x="12" y="17.5" width="7" height="1.2" fill="#fff"/>
<rect x="11" y="23" width="9" height="7" fill="#7ac3e8"/>
<rect x="12" y="25" width="7" height="1.5" fill="#fff" opacity=".8"/>
<g fill="#f6b594"><rect x="9.5" y="35" width="12" height="2.6" rx="1.3"/><rect x="9.5" y="39" width="12" height="2.6" rx="1.3"/><rect x="9.5" y="43" width="12" height="2.6" rx="1.3"/><rect x="9.5" y="47" width="12" height="2.6" rx="1.3"/></g>
<g fill="#ee6526"><rect x="10.5" y="35.8" width="10" height="1"/><rect x="10.5" y="39.8" width="10" height="1"/><rect x="10.5" y="43.8" width="10" height="1"/><rect x="10.5" y="47.8" width="10" height="1"/></g>
<rect x="35" y="7" width="20" height="26" fill="#fbfbf8"/>
<rect x="37" y="12" width="12" height="1.2" fill="#555"/>
<rect x="38" y="16" width="12" height="7.5" fill="#7aaa4e"/>
<rect x="44" y="20" width="10" height="11" fill="#8ab65a"/>
<rect x="46" y="22" width="6" height="6" fill="#e8eee0"/>
<rect x="24.5" y="22" width="19" height="28" fill="#fbfbf8"/>
<rect x="26.5" y="27" width="11" height="1.2" fill="#555"/>
<rect x="26" y="31" width="13" height="8" fill="#7aaa4e"/>
<rect x="31" y="36" width="11" height="13" fill="#8ab65a"/>
<rect x="33" y="39" width="6" height="6" fill="#e8eee0"/>
<rect x="42.5" y="35.5" width="15" height="9.5" rx="1" fill="#4a4f58"/>
<rect x="43.5" y="36.5" width="13" height="7.5" fill="#eef2fa"/>
<rect x="44.5" y="37.5" width="5" height="3" fill="#6fa8e8"/>
<rect x="48" y="45" width="4" height="2" fill="#888"/>
<rect x="0" y="52.5" width="40" height="7.5" fill="#f6d8b6"/>
<g fill="#4a3a30" opacity=".75"><rect x="2" y="54" width="12" height="1"/><rect x="15" y="54" width="12" height="1"/><rect x="2" y="57" width="24" height="1"/><circle cx="29" cy="57" r="1.3"/><rect x="31" y="56" width="5" height="2"/></g>
<rect x="17" y="49.5" width="23" height="3" fill="#fbf3ea"/>
<path d="M39 60V50Q40 46.5 44 46.5H60V60Z" fill="#e5222b"/>
<rect x="47" y="48" width="9" height="1.2" fill="#fbd9c0"/>
<text x="43" y="58.5" font-family="Liberation Sans" font-size="8" font-weight="bold" font-style="italic" fill="#fff3d6">108</text>
</svg></div>
<div class="td" style="left:455px;width:170px;top:676px">20250717130407</div>
<div class="td lk" style="left:625px;width:88px;top:676px">星熠购</div>
<div class="td" style="left:713px;width:88px;top:676px">355 / 本</div>
<div class="td" style="left:801px;width:150px;top:676px">版本: 2023人教版</div>
<div class="td" style="left:951px;width:88px;top:676px">1</div>
<div class="td" style="left:1039px;width:88px;top:676px">355</div>
<div class="td" style="left:1127px;width:88px;top:676px">王小宇</div>
<div class="tag" style="top:676px">微信</div>
<div class="td" style="left:1303px;width:88px;top:676px">待发货</div>
<div class="btn bp" style="top:676px">查看详情</div>
<div class="btn bd" style="top:676px">取消订单</div>
<div class="rl" style="top:728px"></div>
<div class="ptot">共 6 <i style="font-style:normal;margin-left:-1px">条</i></div>
<div class="pb" style="left:298px"><svg viewBox="0 0 1024 1024"><path d="M609.408 149.376 277.76 489.6a32 32 0 0 0 0 44.672l331.648 340.352a29.12 29.12 0 0 0 41.728 0 30.592 30.592 0 0 0 0-42.752L339.264 511.936l311.872-319.872a30.592 30.592 0 0 0 0-42.688 29.12 29.12 0 0 0-41.728 0z"/></svg></div>
<div class="pb pa" style="left:338px">1</div>
<div class="pb" style="left:378px"><svg viewBox="0 0 1024 1024"><path d="M340.864 149.312a30.592 30.592 0 0 0 0 42.752L652.736 512 340.864 831.872a30.592 30.592 0 0 0 0 42.752 29.12 29.12 0 0 0 41.728 0L714.24 534.336a32 32 0 0 0 0-44.672L382.592 149.376a29.12 29.12 0 0 0-41.728 0z"/></svg></div>
<!--/TABLE-->
</body>
</html>
